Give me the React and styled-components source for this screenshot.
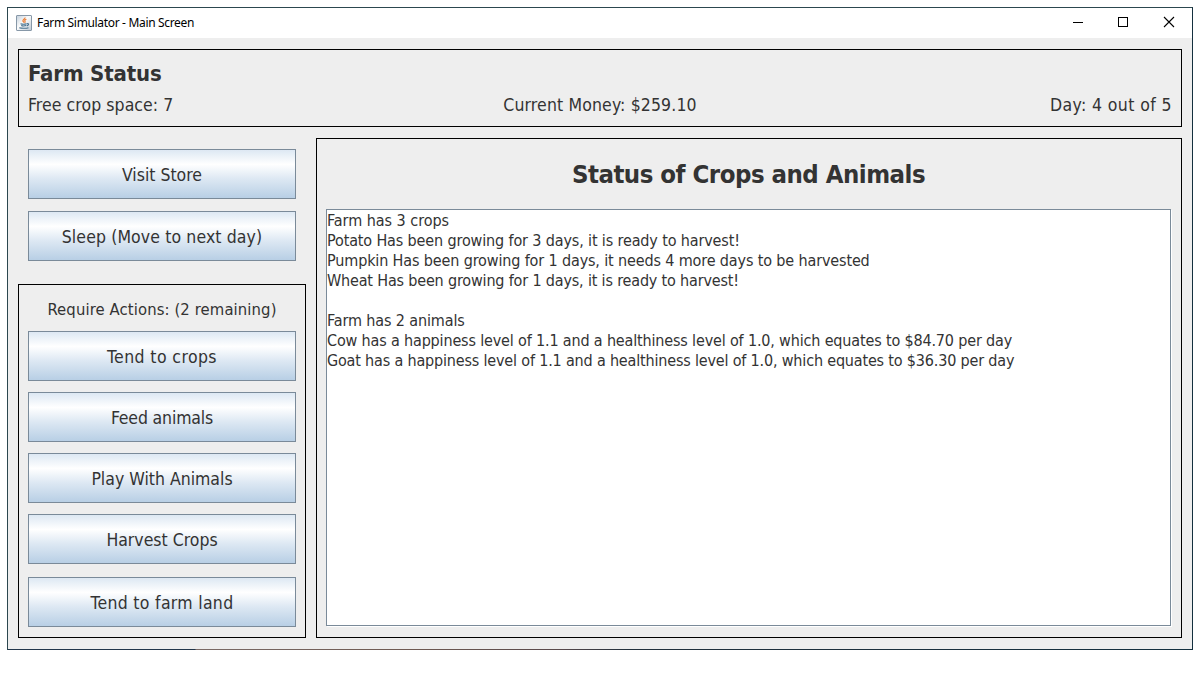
import React from "react";
import styled, { createGlobalStyle } from "styled-components";

const Global = createGlobalStyle`
  * { box-sizing: border-box; }
  body { margin: 0; background: #fff; overflow: hidden; }
`;

const Screen = styled.div`
  width: 1200px;
  height: 675px;
  padding: 7px;
  font-family: "DejaVu Sans Condensed", "DejaVu Sans", sans-serif;
  font-stretch: condensed;
  color: #333;
`;

const Window = styled.main`
  display: flex;
  flex-direction: column;
  width: 1186px;
  height: 643px;
  border: 1px solid #2c474f;
  border-right-color: #14303f;
  border-bottom: 0;
  background: #eee;
`;

const BottomEdge = styled.div`
  flex: 0 0 1px;
  background: linear-gradient(90deg, #22364a 187px, #7a6a66 188px, #6f5a52 400px, #5a4a4c 550px, #22303c 620px, #14303f);
`;

const TitleBar = styled.header`
  display: flex;
  align-items: center;
  flex: 0 0 30px;
  padding-left: 8px;
  background: #fff;
`;

const Title = styled.span`
  flex: 1;
  margin-left: 5px;
  padding-bottom: 1px;
  font: 12px "Noto Sans", sans-serif;
  letter-spacing: -0.33px;
  color: #000;
  white-space: nowrap;
`;

const Controls = styled.div`
  display: flex;
  svg { display: block; }
`;

const Content = styled.div`
  flex: 1;
  display: flex;
  flex-direction: column;
  gap: 11px;
  padding: 11px 10px;
`;

const Panel = styled.section`
  border: 1px solid #000;
`;

const StatusPanel = styled(Panel)`
  height: 78px;
  padding: 10px 9px 0;
`;

const Text = styled.span`
  display: block;
  font-size: ${(p) => p.$size}px;
  line-height: ${(p) => p.$line}px;
  letter-spacing: ${(p) => p.$track || 0}px;
  white-space: pre;
`;

const Heading = styled(Text)`
  font-weight: 700;
`;

const Stats = styled.div`
  display: grid;
  grid-template-columns: 1fr auto 1fr;
  padding-top: 5px;
  > :last-child { justify-self: end; }
`;

const Body = styled.div`
  display: flex;
  gap: 10px;
  height: 500px;
`;

const Sidebar = styled.nav`
  display: flex;
  flex-direction: column;
  width: 288px;
  padding-top: 11px;
`;

const MainButtons = styled.div`
  display: flex;
  flex-direction: column;
  gap: 12px;
  padding: 0 10px;
  margin-bottom: 23px;
`;

const ActionsPanel = styled(Panel)`
  flex: 1;
  display: flex;
  flex-direction: column;
  gap: 11px;
  padding: 14px 9px 10px;
`;

const ActionsLabel = styled(Text)`
  align-self: center;
  height: 21px;
`;

const Button = styled.button`
  display: flex;
  align-items: center;
  justify-content: center;
  width: 268px;
  height: 50px;
  flex: none;
  margin-top: ${(p) => p.$shift || 0}px;
  padding: 2px 0 0;
  border: 1px solid #7a8a99;
  background: linear-gradient(#dde8f3, #fff 30%, #dde8f3 60%, #b8cfe5);
  font-family: inherit;
  font-stretch: inherit;
  color: inherit;
`;

const ReportPanel = styled(Panel)`
  flex: 1;
  display: flex;
  flex-direction: column;
  align-items: center;
  padding: 0 10px 9px 9px;
`;

const ReportTitle = styled.div`
  height: 70px;
  padding-top: 18px;
`;

const Report = styled.div`
  align-self: stretch;
  height: 417px;
  padding-top: 1px;
  border: 1px solid #7a8a99;
  background: #fff;
  box-shadow: 1px 1px 0 #fff;
`;

const JavaIcon = () => (
  <svg width="16" height="16" viewBox="0 0 16 16" fill="none">
    <defs>
      <linearGradient id="tile" x1="0" y1="0" x2="1" y2="1">
        <stop offset="0" stopColor="#c3d0dc" />
        <stop offset="0.45" stopColor="#fbfbfb" />
        <stop offset="1" stopColor="#bcc8d3" />
      </linearGradient>
    </defs>
    <rect x="0.5" y="0.5" width="15" height="15" rx="0.5" fill="url(#tile)" stroke="#8798a8" />
    <path d="M9 2.500c.4 1.500-2.600 2-2.100 3.500.2.600 1 .9 1.100 1.700M10.400 4.300c-1.500.6-2.100 1.200-1.400 2 .4.500.1 1-.3 1.400" stroke="#ea7d35" strokeWidth="1.200" />
    <path d="M4.500 8.700c1.500.5 4.500.5 6.200 0M5.200 10.600c1.300.5 3.600.5 5 0M3.300 12.800c2.200.7 7.200.7 9.200-.1M11 8.700c2.200-.6 2.200 1.600-.2 2.200" stroke="#47718f" strokeWidth="1.100" />
  </svg>
);

const WindowControls = () => (
  <Controls>
    <svg width="138" height="30" viewBox="0 0 138 30" fill="none" stroke="#000" shapeRendering="crispEdges">
      <path d="M19 14.500h10" />
      <rect x="64.500" y="9.500" width="9" height="9" />
      <path d="M110 9l10 10M120 9l-10 10" shapeRendering="auto" strokeWidth="1.100" />
    </svg>
  </Controls>
);

const mainButtons = [
  { label: "Visit Store", track: 0 },
  { label: "Sleep (Move to next day)", track: 0.11 },
];

const actions = [
  { label: "Tend to crops", track: 0.4 },
  { label: "Feed animals", track: -0.15 },
  { label: "Play With Animals", track: 0 },
  { label: "Harvest Crops", track: 0 },
  { label: "Tend to farm land", track: 0.3, shift: 2 },
];

const report = [
  { text: "Farm has 3 crops", track: -0.03 },
  { text: "Potato Has been growing for 3 days, it is ready to harvest!", track: -0.137 },
  { text: "Pumpkin Has been growing for 1 days, it needs 4 more days to be harvested", track: -0.137 },
  { text: "Wheat Has been growing for 1 days, it is ready to harvest!", track: -0.17 },
  { text: " ", track: 0 },
  { text: "Farm has 2 animals", track: -0.12 },
  { text: "Cow has a happiness level of 1.1 and a healthiness level of 1.0, which equates to $84.70 per day", track: -0.16 },
  { text: "Goat has a happiness level of 1.1 and a healthiness level of 1.0, which equates to $36.30 per day", track: -0.175 },
];

const renderButton = ({ label, track, shift }) => (
  <Button key={label} $shift={shift}>
    <Text $size={17.5} $line={22} $track={track}>{label}</Text>
  </Button>
);

export default function App() {
  return (
    <Screen>
      <Global />
      <Window>
        <TitleBar>
          <JavaIcon />
          <Title>Farm Simulator - Main Screen</Title>
          <WindowControls />
        </TitleBar>
        <Content>
          <StatusPanel>
            <Heading $size={22} $line={28} $track={-0.15}>Farm Status</Heading>
            <Stats>
              <Text $size={17.5} $line={24} $track={0.07}>Free crop space: 7</Text>
              <Text $size={17.5} $line={24} $track={0.14}>Current Money: $259.10</Text>
              <Text $size={17.5} $line={24} $track={0.4}>Day: 4 out of 5</Text>
            </Stats>
          </StatusPanel>
          <Body>
            <Sidebar>
              <MainButtons>{mainButtons.map(renderButton)}</MainButtons>
              <ActionsPanel>
                <ActionsLabel $size={16.5} $line={21} $track={0.11}>Require Actions: (2 remaining)</ActionsLabel>
                {actions.map(renderButton)}
              </ActionsPanel>
            </Sidebar>
            <ReportPanel>
              <ReportTitle>
                <Heading $size={25.5} $line={34} $track={-0.5}>Status of Crops and Animals</Heading>
              </ReportTitle>
              <Report>
                {report.map((r, i) => (
                  <Text key={i} $size={16} $line={20} $track={r.track}>{r.text}</Text>
                ))}
              </Report>
            </ReportPanel>
          </Body>
        </Content>
        <BottomEdge />
      </Window>
    </Screen>
  );
}
